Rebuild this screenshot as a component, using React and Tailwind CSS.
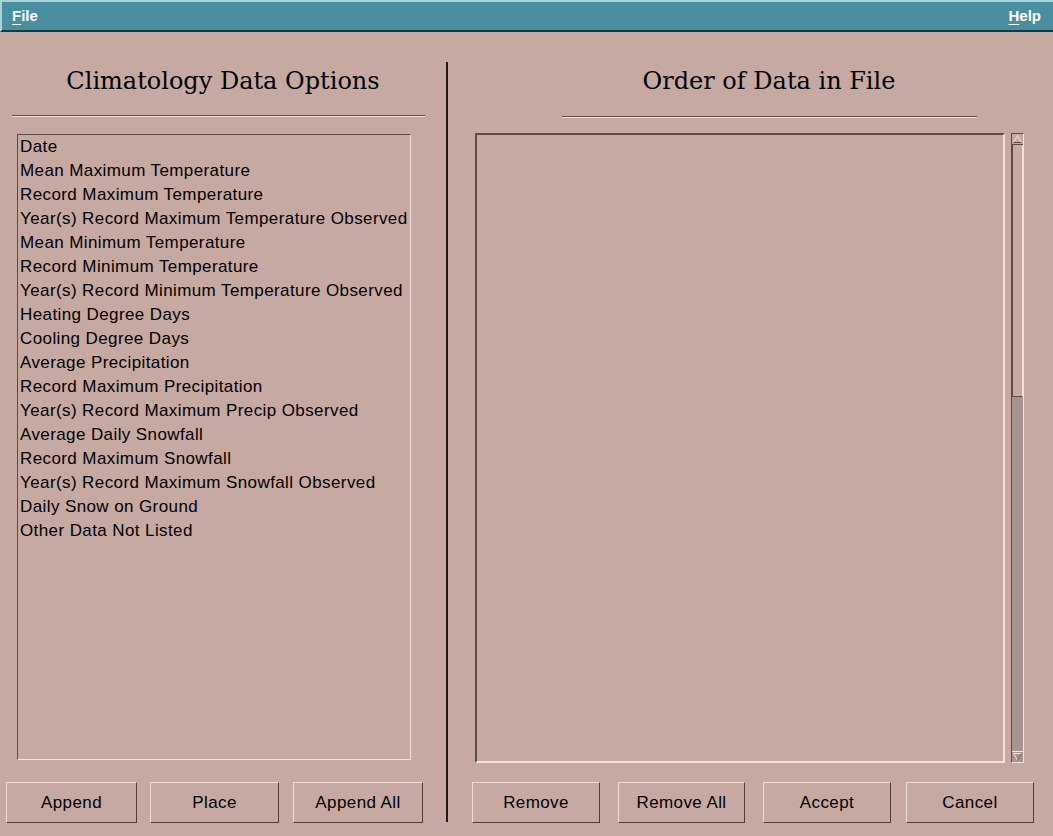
import React from "react";

const items = [
  "Date",
  "Mean Maximum Temperature",
  "Record Maximum Temperature",
  "Year(s) Record Maximum Temperature Observed",
  "Mean Minimum Temperature",
  "Record Minimum Temperature",
  "Year(s) Record Minimum Temperature Observed",
  "Heating Degree Days",
  "Cooling Degree Days",
  "Average Precipitation",
  "Record Maximum Precipitation",
  "Year(s) Record Maximum Precip Observed",
  "Average Daily Snowfall",
  "Record Maximum Snowfall",
  "Year(s) Record Maximum Snowfall Observed",
  "Daily Snow on Ground",
  "Other Data Not Listed",
];

function Btn({ label, w, ml }) {
  return (
    <div
      className={`${w} ${ml} shrink-0 h-[41px] flex items-center justify-center border border-t-[#f0dcd6] border-l-[#f0dcd6] border-b-[#4a3f3c] border-r-[#4a3f3c] text-[17px] tracking-[0.4px] text-black`}
      style={{ fontFamily: '"Liberation Sans", Arial, sans-serif' }}
    >
      {label}
    </div>
  );
}

export default function App() {
  const sans = { fontFamily: '"Liberation Sans", Arial, sans-serif' };
  const serif = { fontFamily: '"DejaVu Serif", "Liberation Serif", serif' };
  return (
    <div className="w-[1053px] h-[836px] bg-[#c6a9a1] flex flex-col overflow-hidden" style={sans}>
      {/* menubar */}
      <div className="h-[32px] shrink-0 bg-[#48909f] border-t-2 border-l-2 border-t-[#a9d2da] border-l-[#a9d2da] border-b-2 border-b-[#123a44] flex items-center justify-between pl-[10px] pr-[12px] text-white text-[15px] font-bold">
        <span><span className="underline underline-offset-[3px]">F</span>ile</span>
        <span><span className="underline underline-offset-[3px]">H</span>elp</span>
      </div>

      <div className="flex flex-1">
        {/* left */}
        <div className="w-[446px] shrink-0 flex flex-col">
          <div className="h-[50px] mt-[24px] flex items-center justify-center text-[24px] text-black" style={serif}>
            Climatology Data Options
          </div>
          <div className="ml-[12px] w-[413px] h-[2px] border-t border-t-[#5a4d49] border-b border-b-[#f3e2dc] mt-[9px]" />
          <div className="ml-[17px] mt-[17px] w-[394px] h-[626px] border border-t-[#5a4d49] border-l-[#5a4d49] border-b-[#f3e2dc] border-r-[#f3e2dc] pl-[2px]">
            {items.map((t) => (
              <div key={t} className="h-[24px] leading-[24px] text-[17px] text-black whitespace-nowrap tracking-[0.4px]">
                {t}
              </div>
            ))}
          </div>
          <div className="flex ml-[6px] mt-[22px]">
            <Btn label="Append" w="w-[131px]" ml="" />
            <Btn label="Place" w="w-[129px]" ml="ml-[13px]" />
            <Btn label="Append All" w="w-[130px]" ml="ml-[14px]" />
          </div>
        </div>

        {/* separator */}
        <div className="w-[2px] shrink-0 bg-[#1f1a19] mt-[30px] mb-[14px]" />

        {/* right */}
        <div className="w-[605px] shrink-0 flex flex-col">
          <div className="h-[50px] mt-[24px] flex items-center justify-center pl-[37px] text-[24px] text-black" style={serif}>
            Order of Data in File
          </div>
          <div className="ml-[114px] w-[415px] h-[2px] border-t border-t-[#5a4d49] border-b border-b-[#f3e2dc] mt-[10px]" />
          <div className="flex mt-[15px] ml-[27px]">
            <div className="w-[530px] h-[630px] border-2 border-t-[#5a4d49] border-l-[#5a4d49] border-b-[#f3e2dc] border-r-[#f3e2dc]" />
            <div className="ml-[6px] w-[13px] h-[630px] flex flex-col border border-t-[#5a4d49] border-l-[#5a4d49] border-b-[#f3e2dc] border-r-[#f3e2dc]">
              <div className="h-[11px] flex items-center justify-center border-b border-b-[#5a4d49]">
                <svg width="9" height="8" viewBox="0 0 9 8">
                  <path d="M4.5 0.5 L8.5 7.5 L0.5 7.5 Z" fill="none" stroke="#f3e2dc" strokeWidth="1" />
                  <path d="M0.5 7.5 L8.5 7.5" stroke="#5a4d49" strokeWidth="1" />
                </svg>
              </div>
              <div className="h-[252px] border-l border-l-[#5a4d49] border-r border-r-[#f3e2dc] border-b border-b-[#5a4d49]" />
              <div className="flex-1 bg-[#a8948f]" />
              <div className="h-[11px] flex items-center justify-center bg-[#a8948f] border-t border-t-[#f3e2dc]">
                <svg width="9" height="8" viewBox="0 0 9 8">
                  <path d="M0.5 0.5 L8.5 0.5 L4.5 7.5 Z" fill="none" stroke="#f3e2dc" strokeWidth="1" />
                  <path d="M8.5 0.5 L4.5 7.5" stroke="#5a4d49" strokeWidth="1" />
                </svg>
              </div>
            </div>
          </div>
          <div className="flex ml-[24px] mt-[19px]">
            <Btn label="Remove" w="w-[128px]" ml="" />
            <Btn label="Remove All" w="w-[127px]" ml="ml-[18px]" />
            <Btn label="Accept" w="w-[128px]" ml="ml-[18px]" />
            <Btn label="Cancel" w="w-[128px]" ml="ml-[15px]" />
          </div>
        </div>
      </div>
    </div>
  );
}
